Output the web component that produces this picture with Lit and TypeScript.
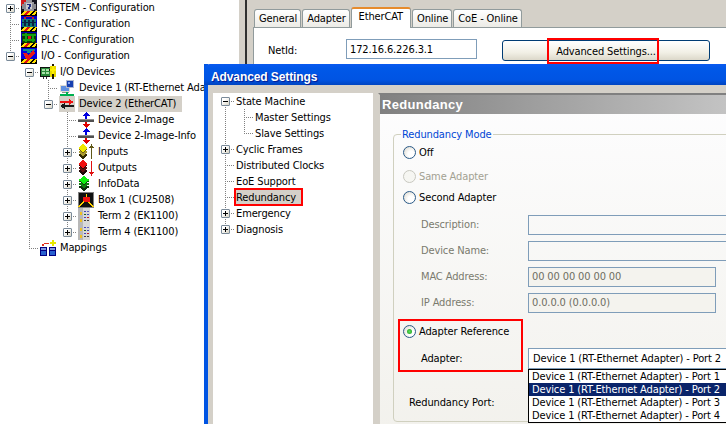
import { LitElement, html, css, svg } from "lit";
import { customElement } from "lit/decorators.js";

const r = (x: number, y: number, w: number, h: number, f: string) =>
  svg`<rect x=${x} y=${y} width=${w} height=${h} fill=${f}></rect>`;
const d = (cx: number, cy: number, w: number, h: number, f: string) =>
  svg`<polygon points="${cx - w / 2},${cy} ${cx},${cy - h / 2} ${cx + w / 2},${cy} ${cx},${cy + h / 2}" fill=${f}></polygon>`;

const hazard = () =>
  svg`${r(0, 11, 17, 5, "#000")}<polygon points="0,15 3,11 6,11 3,15" fill="#ffe000"></polygon><polygon points="6,15 9,11 12,11 9,15" fill="#ffe000"></polygon><polygon points="3,15 6,11 9,11 6,15" fill="#e01010"></polygon><polygon points="11,15 14,11 16,11 14,15" fill="#ffe000"></polygon>`;

const ICONS: Record<string, unknown> = {
  system: svg`${r(0, 0, 16, 16, "#141420")}<polygon points="0,0 7,0 0,6" fill="#d01818"></polygon>${r(3, 2, 10, 9, "#9a9aa0")}${r(5, 0, 6, 13, "#9a9aa0")}${r(1, 4, 14, 5, "#8a8a90")}${r(5, 3, 6, 6, "#c8c8cc")}${r(6, 4, 4, 1, "#1a2a80")}${r(8, 5, 2, 2, "#1a2a80")}${r(7, 7, 2, 2, "#1a2a80")}${hazard()}`,
  nc: svg`${r(0, 0, 16, 16, "#0000d0")}${r(5, 0, 6, 1, "#c02020")}${r(3, 1, 2, 2, "#c02020")}${r(11, 1, 2, 2, "#c02020")}${r(1, 3, 14, 8, "#107878")}${r(3, 4, 2, 6, "#0a2040")}${r(7, 4, 2, 6, "#0a2040")}${r(11, 4, 2, 6, "#0a2040")}${r(1, 6, 14, 1, "#0a2040")}${hazard()}`,
  plc: svg`${r(0, 0, 16, 16, "#0000b0")}${r(1, 1, 14, 10, "#083808")}${r(1, 2, 14, 2, "#10a010")}${r(2, 7, 12, 2, "#10a010")}${r(4, 1, 2, 9, "#10a010")}${r(11, 3, 2, 7, "#10a010")}${r(7, 4, 3, 3, "#d01818")}${hazard()}`,
  io: svg`${r(0, 0, 16, 16, "#0000e0")}${r(2, 1, 12, 2, "#109090")}${r(6, 3, 4, 2, "#109090")}<polygon points="2,5 5,5 7,7 13,2 14,5 8,11 5,11" fill="#e81818"></polygon>${hazard()}`,
  iodev: svg`${r(0, 3, 12, 10, "#101010")}${r(1, 4, 10, 8, "#2a8a3a")}${r(2, 5, 3, 2, "#a8e0a8")}${r(6, 5, 3, 2, "#a8e0a8")}${r(2, 8, 3, 2, "#a8e0a8")}${r(6, 8, 3, 2, "#a8e0a8")}${r(10, 2, 6, 11, "#e8d800")}${r(12, 0, 2, 15, "#201800")}${r(9, 5, 7, 2, "#201800")}${r(12, 2, 2, 8, "#fff000")}${r(10, 5, 6, 2, "#fff000")}${r(3, 13, 1, 2, "#303030")}${r(6, 13, 1, 2, "#303030")}`,
  dev1: svg`${r(1, 5, 10, 7, "#e0dcd4")}${r(2, 6, 8, 5, "#6090e0")}${r(7, 0, 8, 8, "#b0b8d0")}${r(8, 1, 6, 6, "#1840b0")}${r(9, 2, 2, 2, "#80a0f0")}${r(3, 12, 7, 1, "#909090")}${r(1, 14, 14, 2, "#00b050")}${r(7, 12, 2, 3, "#00b050")}`,
  dev2: svg`${r(0, 0, 16, 16, "#d4d0c8")}${r(1, 5, 11, 2, "#f01010")}<polygon points="10,3 15,6 10,9" fill="#f01010"></polygon>${r(5, 9, 10, 2, "#181818")}<polygon points="6,7 1,10 6,13" fill="#181818"></polygon>`,
  img: svg`${r(0, 7, 16, 3, "#505050")}${r(0, 7, 16, 1, "#909090")}<polygon points="8,0 12,4 4,4" fill="#0000e0"></polygon>${r(7, 4, 2, 3, "#0000e0")}<polygon points="8,16 12,12 4,12" fill="#e00000"></polygon>${r(7, 10, 2, 3, "#e00000")}`,
  inputs: svg`${d(5, 11, 10, 8, "#302800")}${d(5, 8, 10, 8, "#a89830")}${d(5, 5, 10, 8, "#706010")}${d(5, 4, 10, 8, "#f0e800")}${r(13, 2, 1, 13, "#605818")}<polygon points="13.5,0 16,4 11,4" fill="#605818"></polygon>`,
  outputs: svg`${d(5, 11, 10, 8, "#200808")}${d(5, 8, 10, 8, "#601010")}${d(5, 5, 10, 8, "#300808")}${d(5, 4, 10, 8, "#f01010")}${r(13, 1, 1, 12, "#e01010")}<polygon points="13.5,16 16,12 11,12" fill="#e01010"></polygon>`,
  info: svg`${d(6, 11, 11, 8, "#103010")}${d(6, 8, 11, 8, "#108010")}${d(6, 5, 11, 8, "#104010")}${d(6, 4, 11, 8, "#10f010")}`,
  box: svg`${r(0, 0, 16, 16, "#808080")}${r(1, 1, 14, 14, "#101010")}${r(5, 5, 7, 5, "#f01010")}${r(8, 2, 1, 3, "#ffd000")}<polygon points="5,9 6,10 2,15 0,15" fill="#ffd000"></polygon><polygon points="11,9 10,10 14,15 16,15" fill="#ffd000"></polygon>`,
  term: svg`${r(0, 0, 12, 16, "#b8b8b8")}${r(2, 4, 2, 3, "#f0c020")}${r(2, 11, 2, 3, "#f0c020")}${r(5, 0, 7, 16, "#d8d8d8")}${r(6, 3, 2, 1, "#4040c0")}${r(9, 3, 2, 1, "#6060c0")}${r(6, 6, 2, 1, "#206020")}${r(9, 6, 2, 1, "#4040c0")}${r(6, 9, 2, 1, "#4040c0")}${r(9, 9, 2, 1, "#c02020")}${r(6, 12, 2, 1, "#404040")}${r(9, 12, 2, 1, "#404040")}`,
  map: svg`${r(0, 7, 7, 9, "#000080")}${r(1, 8, 5, 2, "#8098e0")}${r(1, 11, 5, 4, "#2860d0")}${r(9, 7, 7, 9, "#000080")}${r(10, 8, 5, 2, "#8098e0")}${r(10, 11, 5, 4, "#2860d0")}${r(4, 3, 5, 1, "#e03020")}${r(2, 4, 2, 2, "#e03020")}${r(12, 0, 2, 6, "#e8e800")}${r(10, 2, 6, 2, "#e8e800")}`,
};

interface Node { cells: string[]; exp?: "+" | "-"; icon?: string; label: string; sel?: boolean; red?: boolean; }

const MAIN: Node[] = [
  { cells: ["f"], exp: "+", icon: "system", label: "SYSTEM - Configuration" },
  { cells: ["t"], icon: "nc", label: "NC - Configuration" },
  { cells: ["t"], icon: "plc", label: "PLC - Configuration" },
  { cells: ["l"], exp: "-", icon: "io", label: "I/O - Configuration" },
  { cells: ["n", "f"], exp: "-", icon: "iodev", label: "I/O Devices" },
  { cells: ["n", "v", "t"], icon: "dev1", label: "Device 1 (RT-Ethernet Adapter)" },
  { cells: ["n", "v", "l"], exp: "-", icon: "dev2", label: "Device 2 (EtherCAT)", sel: true },
  { cells: ["n", "v", "n", "t"], icon: "img", label: "Device 2-Image" },
  { cells: ["n", "v", "n", "t"], icon: "img", label: "Device 2-Image-Info" },
  { cells: ["n", "v", "n", "t"], exp: "+", icon: "inputs", label: "Inputs" },
  { cells: ["n", "v", "n", "t"], exp: "+", icon: "outputs", label: "Outputs" },
  { cells: ["n", "v", "n", "t"], exp: "+", icon: "info", label: "InfoData" },
  { cells: ["n", "v", "n", "t"], exp: "+", icon: "box", label: "Box 1 (CU2508)" },
  { cells: ["n", "v", "n", "t"], exp: "+", icon: "term", label: "Term 2 (EK1100)" },
  { cells: ["n", "v", "n", "l"], exp: "+", icon: "term", label: "Term 4 (EK1100)" },
  { cells: ["n", "l"], icon: "map", label: "Mappings" },
];

const SETTINGS: Node[] = [
  { cells: ["f"], exp: "-", label: "State Machine" },
  { cells: ["v", "t"], label: "Master Settings" },
  { cells: ["v", "l"], label: "Slave Settings" },
  { cells: ["t"], exp: "+", label: "Cyclic Frames" },
  { cells: ["t"], label: "Distributed Clocks" },
  { cells: ["t"], label: "EoE Support" },
  { cells: ["t"], label: "Redundancy", red: true },
  { cells: ["t"], exp: "+", label: "Emergency" },
  { cells: ["l"], exp: "+", label: "Diagnosis" },
];

const TABS = ["General", "Adapter", "EtherCAT", "Online", "CoE - Online"];
const PORTS = [1, 2, 3, 4];

@customElement("app-root")
export class AppRoot extends LitElement {
  static styles = css`
    :host { display: block; position: relative; width: 726px; height: 424px; overflow: hidden; background: #d4d0c8;
      font: 11px "DejaVu Sans Condensed", "Liberation Sans", sans-serif; letter-spacing: -0.12px; color: #000; }
    * { box-sizing: border-box; }
    .main { display: flex; height: 424px; }
    .treepane { width: 239px; background: #fff; overflow: hidden; flex: none; }
    .split { width: 8px; flex: none; background: #d4d0c8; border-right: 2px solid #303030; }
    .right { flex: 1; display: flex; flex-direction: column; padding: 6px 0 0 6px; min-width: 0; }

    .row { display: flex; align-items: center; height: 16px; white-space: nowrap; }
    .cell { width: 19px; height: 16px; flex: none; display: flex; align-items: center; background-repeat: no-repeat; --dots-v: repeating-linear-gradient(to bottom, #808080 0 1px, transparent 1px 2px); --dots-h: repeating-linear-gradient(to right, #808080 0 1px, transparent 1px 2px); }
    .cell.v { background-image: var(--dots-v); background-size: 1px 16px; background-position: 10px 0; }
    .cell.t { background-image: var(--dots-v), var(--dots-h); background-size: 1px 16px, 9px 1px; background-position: 10px 0, 10px 8px; }
    .cell.l { background-image: var(--dots-v), var(--dots-h); background-size: 1px 8px, 9px 1px; background-position: 10px 0, 10px 8px; }
    .cell.f { background-image: var(--dots-v), var(--dots-h); background-size: 1px 8px, 9px 1px; background-position: 10px 8px, 10px 8px; }
    .exp { width: 9px; height: 9px; margin-left: 6px; border: 1px solid #7a8a99; border-radius: 1px; background: linear-gradient(135deg, #fff 30%, #d8d4c4); display: grid; place-items: center; }
    .exp i { display: block; width: 5px; height: 1px; background: #000; grid-area: 1 / 1; }
    .exp i.p { width: 1px; height: 5px; }
    .icon { width: 16px; height: 16px; flex: none; margin-left: 2px; display: block; }
    .label { margin-left: 3px; padding: 0 1px; line-height: 15px; height: 16px; }
    .label.sel { background: #d4d0c8; padding-right: 6px; }
    .row.plain .label { margin-left: 2px; padding: 0; line-height: 18px; }
    .row.plain .label.red { background: #d4d0c8; outline: 2px solid #f00; height: 14px; line-height: 16px; width: 65px; }

    .tabs { display: flex; align-items: flex-end; height: 21px; padding-left: 1px; position: relative; z-index: 1; gap: 1px; flex: none; }
    .tab { height: 18px; padding: 0 3px 0 4px; line-height: 18px; border: 1px solid #919b9c; border-bottom: none; border-radius: 3px 3px 0 0; background: linear-gradient(#fff, #ecebe6); white-space: nowrap; }
    .tab.on { height: 21px; background: #fff; border-top: 2px solid #e68b2c; margin-bottom: -1px; padding: 0 7px; line-height: 16px; }
    .panel { flex: 1; background: #fff; border: 1px solid #919b9c; border-right: none; display: flex; align-items: flex-start; padding: 11px 0 0 14px; }
    .netlabel { width: 78px; line-height: 22px; margin-top: 1px; }
    .netinput { width: 131px; height: 20px; border: 1px solid #7f9db9; padding: 0 3px; line-height: 20px; }
    .btn { position: relative; margin: 1px 0 0 25px; width: 208px; height: 21px; border: 1px solid #003c74; border-radius: 3px; background: linear-gradient(#fff, #f2f0e6 60%, #dcd8ca); text-align: center; line-height: 22px; }
    .redbox { position: absolute; border: 2px solid #f00; pointer-events: none; }
    .btn .redbox { left: 44px; top: -3px; width: 112px; height: 26px; }

    .dialog { position: absolute; left: 204px; top: 64px; width: 560px; height: 380px; display: flex; flex-direction: column; background: #d4d0c8; border-left: 4px solid #0054e3; }
    .title { margin-left: -4px; height: 21px; flex: none; border-radius: 6px 6px 0 0; background: linear-gradient(#0a5af0, #0058e8 20%, #0054e3 75%, #0044c0); color: #fff; font: bold 12px "Liberation Sans", sans-serif; letter-spacing: -0.1px; line-height: 27px; padding-left: 7px; text-shadow: 1px 1px 1px #00188c; }
    .dlgbody { flex: 1; display: flex; padding: 8px 0 0 5px; gap: 5px; min-height: 0; }
    .settree { width: 160px; background: #fff; padding: 0 0 0 2px; flex: none; }
    .page { flex: 1; border-top: 2px solid #808080; border-left: 2px solid #d4d0c8; background: linear-gradient(#fdfdfe, #f2f1ec); display: flex; flex-direction: column; }
    .pagehead { height: 19px; flex: none; background: linear-gradient(to right, #808080, #c4c4c4 350px); color: #fff; font: bold 13px "Liberation Sans", sans-serif; letter-spacing: 0.3px; line-height: 19px; padding-left: 2px; }
    fieldset { margin: 13px 0 0 13px; padding: 0; width: 500px; height: 295px; border: 1px solid #d0d0bf; border-radius: 4px; min-inline-size: 0; }
    legend { margin-left: 7px; padding: 0 1px; color: #0046d5; line-height: 15px; height: 14px; }
    .form { display: grid; position: relative; grid-template-rows: 23px 24px 19px 5px 26px 26px 26px 26px 30px 24px 18px 26px; }
    .frow { display: flex; align-items: center; }
    .radio { width: 13px; height: 13px; flex: none; margin-left: 9px; border-radius: 50%; border: 1px solid #2a5a88; background: radial-gradient(circle at 65% 65%, #fff 30%, #d8d4c8); display: grid; place-items: center; }
    .radio.dis { border-color: #c8c8c0; background: #f6f6f2; }
    .radio.on i { display: block; width: 5px; height: 5px; border-radius: 50%; background: radial-gradient(#5ce05c, #1a9a1a); }
    .rtext { margin-left: 3px; white-space: nowrap; }
    .dis-t { color: #a2a192; }
    .flabel { width: 107px; margin-left: 27px; flex: none; color: #7a7a6e; margin-bottom: 2px; }
    .flabel.on { color: #000; margin-bottom: 0; }
    .field { height: 20px; border: 1px solid #7f9db9; flex: none; width: 300px; padding: 0 3px; line-height: 18px; color: #6e6e62; white-space: nowrap; }
    .field.short { width: 188px; background: #f4f3ee; }
    .combo { position: relative; height: 21px; width: 300px; border: 1px solid #7f9db9; background: #fff; padding: 0 4px; line-height: 19px; white-space: nowrap; flex: none; }
    .drop { position: absolute; left: -1px; top: 20px; width: 300px; height: 54px; border: 1px solid #000; background: #fff; z-index: 2; }
    .drop div { height: 13px; line-height: 13px; padding-left: 3px; }
    .drop div.on { background: #0a246a; color: #fff; }
    .form .redbox { left: 4px; top: 178px; width: 125px; height: 53px; }
    .portlabel { margin: 2px 0 0 15px; white-space: nowrap; }
  `;

  private row(n: Node, plain = false) {
    return html`<div class="row ${plain ? "plain" : ""}">
      ${n.cells.map((c, i) => html`<div class="cell ${c}">
        ${i === n.cells.length - 1 && n.exp
          ? html`<div class="exp"><i></i>${n.exp === "+" ? html`<i class="p"></i>` : ""}</div>`
          : ""}
      </div>`)}
      ${n.icon ? html`<svg class="icon" viewBox="0 0 16 16" shape-rendering="crispEdges">${ICONS[n.icon]}</svg>` : ""}
      <div class="label ${n.sel ? "sel" : ""} ${n.red ? "red" : ""}">${n.label}</div>
    </div>`;
  }

  render() {
    return html`
      <div class="main">
        <div class="treepane">${MAIN.map((n) => this.row(n))}</div>
        <div class="split"></div>
        <div class="right">
          <div class="tabs">${TABS.map((t) => html`<div class="tab ${t === "EtherCAT" ? "on" : ""}">${t}</div>`)}</div>
          <div class="panel">
            <div class="netlabel">NetId:</div>
            <div class="netinput">172.16.6.226.3.1</div>
            <div class="btn">Advanced Settings...<div class="redbox"></div></div>
          </div>
        </div>
      </div>
      <div class="dialog">
        <div class="title">Advanced Settings</div>
        <div class="dlgbody">
          <div class="settree">${SETTINGS.map((n) => this.row(n, true))}</div>
          <div class="page">
            <div class="pagehead">Redundancy</div>
            <fieldset>
              <legend>Redundancy Mode</legend>
              <div class="form">
                <div class="frow"><div class="radio"></div><span class="rtext">Off</span></div>
                <div class="frow"><div class="radio dis"></div><span class="rtext dis-t">Same Adapter</span></div>
                <div class="frow"><div class="radio"></div><span class="rtext">Second Adapter</span></div>
                <div></div>
                <div class="frow"><span class="flabel">Description:</span><div class="field"></div></div>
                <div class="frow"><span class="flabel">Device Name:</span><div class="field"></div></div>
                <div class="frow"><span class="flabel">MAC Address:</span><div class="field short">00 00 00 00 00 00</div></div>
                <div class="frow"><span class="flabel">IP Address:</span><div class="field short">0.0.0.0 (0.0.0.0)</div></div>
                <div class="frow"><div class="radio on"><i></i></div><span class="rtext">Adapter Reference</span></div>
                <div class="frow"><span class="flabel on">Adapter:</span>
                  <div class="combo">Device 1 (RT-Ethernet Adapter) - Port 2
                    <div class="drop">${PORTS.map((p) => html`<div class="${p === 2 ? "on" : ""}">Device 1 (RT-Ethernet Adapter) - Port ${p}</div>`)}</div>
                  </div>
                </div>
                <div></div>
                <div class="frow"><span class="portlabel">Redundancy Port:</span></div>
                <div class="redbox"></div>
              </div>
            </fieldset>
          </div>
        </div>
      </div>
    `;
  }
}
